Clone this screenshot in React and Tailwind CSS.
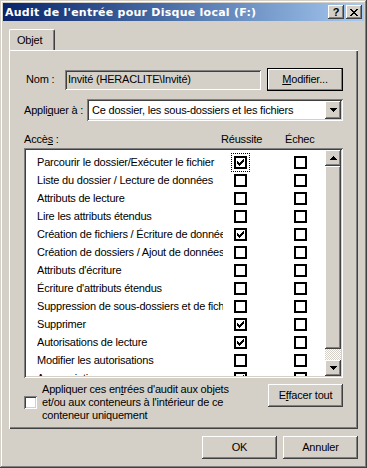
import React from "react";

const raised =
    "shadow-[inset_-1px_-1px_#404040,inset_1px_1px_#ffffff,inset_-2px_-2px_#808080,inset_2px_2px_#d4d0c8]";
const sunken =
    "shadow-[inset_1px_1px_#808080,inset_-1px_-1px_#ffffff,inset_2px_2px_#404040,inset_-2px_-2px_#d4d0c8]";

const rows = [
    ["Parcourir le dossier/Exécuter le fichier", true],
    ["Liste du dossier / Lecture de données", false],
    ["Attributs de lecture", false],
    ["Lire les attributs étendus", false],
    ["Création de fichiers / Écriture de données", true],
    ["Création de dossiers / Ajout de données", false],
    ["Attributs d'écriture", false],
    ["Écriture d'attributs étendus", false],
    ["Suppression de sous-dossiers et de fichiers", false],
    ["Supprimer", true],
    ["Autorisations de lecture", true],
    ["Modifier les autorisations", false],
    ["Appropriation", true],
];

function Check() {
    return (
        <svg width="7" height="7" viewBox="0 0 7 7" shapeRendering="crispEdges">
            <path
                d="M0 2h1v3h-1z M1 3h1v3h-1z M2 4h1v3h-1z M3 3h1v3h-1z M4 2h1v3h-1z M5 1h1v3h-1z M6 0h1v3h-1z"
                fill="#000"
            />
        </svg>
    );
}

function Box({ checked, focus }) {
    return (
        <div
            className={`w-[13px] h-[13px] border-2 border-black bg-white flex items-center justify-center shrink-0 ${
                focus ? "outline outline-1 outline-dotted outline-black outline-offset-[2px]" : ""
            }`}
        >
            {checked && <Check />}
        </div>
    );
}

function Arrow({ up }) {
    return (
        <svg width="7" height="4" viewBox="0 0 7 4" shapeRendering="crispEdges">
            <path
                d={up ? "M3 0h1v1h-1z M2 1h3v1h-3z M1 2h5v1h-5z M0 3h7v1h-7z" : "M0 0h7v1h-7z M1 1h5v1h-5z M2 2h3v1h-3z M3 3h1v1h-1z"}
                fill="#000"
            />
        </svg>
    );
}

function Button({ children, className = "" }) {
    return (
        <div className={`h-[23px] flex items-center justify-center bg-[#d4d0c8] ${raised} ${className}`}>
            {children}
        </div>
    );
}

export default function App() {
    return (
        <div
            className={`w-[367px] h-[468px] bg-[#d4d0c8] p-[3px] flex flex-col text-[11px] leading-[13px] tracking-[-0.2px] text-black font-['Liberation_Sans',Arial,sans-serif] shadow-[inset_-1px_-1px_#404040,inset_1px_1px_#d4d0c8,inset_-2px_-2px_#808080,inset_2px_2px_#ffffff]`}
        >
            {/* Title bar */}
            <div className="h-[18px] flex items-center bg-gradient-to-r from-[#0a246a] to-[#a6caf0] pl-[2px] pr-[2px]">
                <span className="flex-1 font-bold text-white text-[11px] tracking-[0.25px] whitespace-nowrap font-['DejaVu_Sans',sans-serif]">
                    Audit de l'entrée pour Disque local (F:)
                </span>
                <div className={`w-[16px] h-[14px] bg-[#d4d0c8] ${raised} flex items-center justify-center font-bold text-[11px] leading-none`}>
                    ?
                </div>
                <div className={`w-[16px] h-[14px] ml-[2px] bg-[#d4d0c8] ${raised} flex items-center justify-center`}>
                    <svg width="8" height="7" viewBox="0 0 8 7" shapeRendering="crispEdges">
                        <path
                            d="M0 0h2v1h-2z M6 0h2v1h-2z M1 1h2v1h-2z M5 1h2v1h-2z M2 2h4v1h-4z M3 3h2v1h-2z M2 4h4v1h-4z M1 5h2v1h-2z M5 5h2v1h-2z M0 6h2v1h-2z M6 6h2v1h-2z"
                            fill="#000"
                        />
                    </svg>
                </div>
            </div>

            <div className="flex-1 px-[6px] pt-[8px] flex flex-col">
                {/* Tab */}
                <div className="h-[21px] flex">
                    <div className="relative z-10 w-[46px] h-[21px] -mb-px bg-[#d4d0c8] border-t border-l border-white border-r border-r-[#404040] rounded-t-[2px] shadow-[inset_-1px_0_#808080] pl-[7px] pt-[4px]">
                        Objet
                    </div>
                </div>

                {/* Panel */}
                <div className="w-[349px] h-[379px] shadow-[inset_1px_1px_#ffffff,inset_-1px_-1px_#404040,inset_-2px_-2px_#808080] px-[15px] pt-[18px] flex flex-col">
                    <div className="h-[23px] flex items-center">
                        <span className="w-[41px] pl-[2px]">Nom :</span>
                        <div className={`w-[196px] h-[20px] pl-[3px] flex items-center ${sunken}`}>
                            Invité (HERACLITE\Invité)
                        </div>
                        <div className="ml-[6px] w-[76px] h-[23px] flex items-center justify-center shadow-[inset_0_0_0_1px_#000000,inset_-2px_-2px_#808080,inset_2px_2px_#ffffff]">
                            <span>
                                <u>M</u>odifier...
                            </span>
                        </div>
                    </div>

                    <div className="mt-[8px] h-[22px] flex items-center">
                        <span className="w-[63px]">
                            Appli<u>q</u>uer à :
                        </span>
                        <div className={`w-[256px] h-[22px] bg-white p-[2px] flex items-center ${sunken}`}>
                            <span className="flex-1 pl-[3px] whitespace-nowrap">
                                Ce dossier, les sous-dossiers et les fichiers
                            </span>
                            <div className={`w-[16px] h-[18px] bg-[#d4d0c8] ${raised} flex items-center justify-center`}>
                                <Arrow />
                            </div>
                        </div>
                    </div>

                    <div className="mt-[11px] h-[14px] flex items-center">
                        <span className="w-[197px]">
                            Accè<u>s</u> :
                        </span>
                        <span className="w-[64px]">Réussite</span>
                        <span>Échec</span>
                    </div>

                    {/* List */}
                    <div className={`mt-[2px] w-[319px] h-[230px] bg-white p-[2px] flex ${sunken}`}>
                        <div className="flex-1 overflow-hidden pt-[3px]">
                            {rows.map(([label, ok], i) => (
                                <div key={i} className="h-[18px] flex items-center">
                                    <span className="ml-[11px] w-[186px] overflow-hidden whitespace-nowrap">
                                        {label}
                                    </span>
                                    <div className="ml-[11px]">
                                        <Box checked={ok} focus={i === 0} />
                                    </div>
                                    <div className="ml-[47px]">
                                        <Box checked={false} />
                                    </div>
                                </div>
                            ))}
                        </div>
                        <div className="w-[16px] flex flex-col">
                            <div className={`h-[16px] bg-[#d4d0c8] ${raised} flex items-center justify-center`}>
                                <Arrow up />
                            </div>
                            <div className={`h-[183px] bg-[#d4d0c8] ${raised}`} />
                            <div className="flex-1 bg-[repeating-conic-gradient(#ffffff_0%_25%,#d4d0c8_0%_50%)] bg-[length:2px_2px]" />
                            <div className={`h-[16px] bg-[#d4d0c8] ${raised} flex items-center justify-center`}>
                                <Arrow />
                            </div>
                        </div>
                    </div>

                    <div className="mt-[5px] flex items-start">
                        <div className="flex items-center">
                            <div className={`w-[13px] h-[13px] bg-white ${sunken}`} />
                            <span className="ml-[5px]">
                                Appliquer ces en<u>t</u>rées d'audit aux objets
                                <br />
                                et/ou aux conteneurs à l'intérieur de ce
                                <br />
                                conteneur uniquement
                            </span>
                        </div>
                        <Button className="ml-auto mt-[1px] w-[75px]">
                            <span>
                                E<u>f</u>facer tout
                            </span>
                        </Button>
                    </div>
                </div>

                {/* Footer */}
                <div className="mt-[7px] flex justify-end gap-[6px]">
                    <Button className="w-[75px]">OK</Button>
                    <Button className="w-[75px]">Annuler</Button>
                </div>
            </div>
        </div>
    );
}
